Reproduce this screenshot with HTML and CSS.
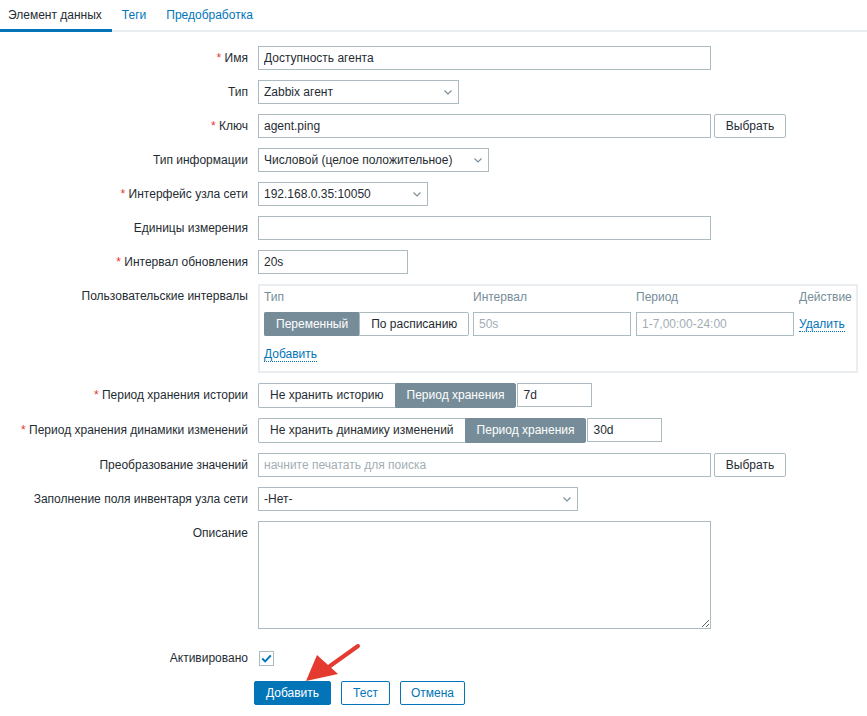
FILE: index.html
```html
<!DOCTYPE html>
<html lang="ru">
<head>
<meta charset="utf-8">
<title>Элемент данных</title>
<link rel="stylesheet" href="styles.css">
</head>
<body>
<nav class="tabs">
  <a class="tab active">Элемент данных</a>
  <a class="tab">Теги</a>
  <a class="tab">Предобработка</a>
</nav>

<form class="form">
  <div class="label"><span class="req">*</span> Имя</div>
  <div class="field"><input class="input w-453" value="Доступность агента"></div>

  <div class="label">Тип</div>
  <div class="field">
    <div class="select w-201"><span>Zabbix агент</span><svg class="chev" width="8" height="5" viewBox="0 0 8 5"><path d="M0.5 0.5L4 4L7.5 0.5"/></svg></div>
  </div>

  <div class="label"><span class="req">*</span> Ключ</div>
  <div class="field"><input class="input w-453" value="agent.ping"><button type="button" class="btn-alt">Выбрать</button></div>

  <div class="label">Тип информации</div>
  <div class="field">
    <div class="select w-231"><span>Числовой (целое положительное)</span><svg class="chev" width="8" height="5" viewBox="0 0 8 5"><path d="M0.5 0.5L4 4L7.5 0.5"/></svg></div>
  </div>

  <div class="label"><span class="req">*</span> Интерфейс узла сети</div>
  <div class="field">
    <div class="select w-170"><span>192.168.0.35:10050</span><svg class="chev" width="8" height="5" viewBox="0 0 8 5"><path d="M0.5 0.5L4 4L7.5 0.5"/></svg></div>
  </div>

  <div class="label">Единицы измерения</div>
  <div class="field"><input class="input w-453" value=""></div>

  <div class="label"><span class="req">*</span> Интервал обновления</div>
  <div class="field"><input class="input w-150" value="20s"></div>

  <div class="label">Пользовательские интервалы</div>
  <div class="field">
    <div class="intervals">
      <div class="int-grid">
        <div class="th">Тип</div>
        <div class="th">Интервал</div>
        <div class="th">Период</div>
        <div class="th">Действие</div>

        <div class="seg">
          <span class="seg-item on">Переменный</span><span class="seg-item">По расписанию</span>
        </div>
        <input class="input" placeholder="50s">
        <input class="input" placeholder="1-7,00:00-24:00">
        <div class="td-link"><a class="link">Удалить</a></div>
      </div>
      <div class="add-row"><a class="link">Добавить</a></div>
    </div>
  </div>

  <div class="label"><span class="req">*</span> Период хранения истории</div>
  <div class="field seg-row">
    <div class="seg">
      <span class="seg-item">Не хранить историю</span><span class="seg-item on">Период хранения</span>
    </div>
    <input class="input w-75" value="7d">
  </div>

  <div class="label"><span class="req">*</span> Период хранения динамики изменений</div>
  <div class="field seg-row">
    <div class="seg">
      <span class="seg-item">Не хранить динамику изменений</span><span class="seg-item on">Период хранения</span>
    </div>
    <input class="input w-75" value="30d">
  </div>

  <div class="label">Преобразование значений</div>
  <div class="field"><input class="input w-453" placeholder="начните печатать для поиска"><button type="button" class="btn-alt">Выбрать</button></div>

  <div class="label">Заполнение поля инвентаря узла сети</div>
  <div class="field">
    <div class="select w-320"><span>-Нет-</span><svg class="chev" width="8" height="5" viewBox="0 0 8 5"><path d="M0.5 0.5L4 4L7.5 0.5"/></svg></div>
  </div>

  <div class="label">Описание</div>
  <div class="field"><textarea class="textarea"></textarea></div>

  <div class="label row-check">Активировано</div>
  <div class="field row-check">
    <span class="checkbox"><svg width="11" height="9" viewBox="0 0 11 9"><path d="M1.2 4.6L4.2 7.4L9.8 1.4"/></svg></span>
  </div>

  <div class="field actions">
    <button type="button" class="btn-main">Добавить</button>
    <button type="button" class="btn-sec">Тест</button>
    <button type="button" class="btn-sec">Отмена</button>
  </div>
</form>

<svg class="pointer" width="70" height="50" viewBox="0 0 70 50">
  <path class="shaft" d="M63 4L35 24"/>
  <path class="head" d="M11 39L22 13L43 32Z"/>
</svg>
</body>
</html>
```

FILE: styles.css
```css
* { box-sizing: border-box; }

html, body {
  margin: 0;
  background: #fff;
}

body {
  position: relative;
  font-family: "Liberation Sans", Arial, sans-serif;
  font-size: 12px;
  color: #1f2c33;
}

/* tab strip */
.tabs {
  display: flex;
  border-bottom: 2px solid #ebeef0;
  height: 32px;
}

.tab {
  display: block;
  padding: 8px 10px 0;
  line-height: 14px;
  height: 32px;
  border-bottom: 3px solid transparent;
  color: #0275b8;
  cursor: pointer;
}

.tab:first-child { padding-left: 8px; padding-right: 10px; }

.tab.active {
  color: #1f2c33;
  border-bottom-color: #0275b8;
}

/* form grid */
.form {
  display: grid;
  grid-template-columns: 248px 1fr;
  column-gap: 10px;
  row-gap: 10px;
  margin-top: 14px;
}

.label {
  text-align: right;
  line-height: 24px;
  white-space: nowrap;
}

.req { color: #e33734; }

.field {
  display: flex;
  align-items: flex-start;
  min-height: 24px;
}

.input {
  height: 24px;
  border: 1px solid #acbbc0;
  background: #fff;
  padding: 0 5px;
  font: inherit;
  color: #1f2c33;
  outline: none;
  margin: 0;
}

.input::placeholder { color: #a3aeb4; }

.w-453 { width: 453px; }
.w-320 { width: 320px; }
.w-231 { width: 231px; }
.w-201 { width: 201px; }
.w-170 { width: 170px; }
.w-150 { width: 150px; }
.w-75 { width: 75px; }

.select {
  display: flex;
  align-items: center;
  justify-content: space-between;
  height: 24px;
  border: 1px solid #acbbc0;
  padding: 0 6px 0 5px;
  background: #fff;
}

.chev path {
  fill: none;
  stroke: #768d99;
  stroke-width: 1.1;
}

.btn-alt {
  height: 24px;
  width: 72px;
  margin-left: 3px;
  border: 1px solid #acbbc0;
  border-radius: 2px;
  background: #fff;
  font: inherit;
  color: #1f2c33;
  padding: 0;
}

/* segmented switch */
.seg {
  display: flex;
  height: 25px;
}

.seg-item {
  display: block;
  line-height: 23px;
  padding: 0 11px;
  border: 1px solid #acbbc0;
  background: #fff;
  white-space: nowrap;
}

.seg-item:first-child { border-radius: 2px 0 0 2px; border-right: 0; }
.seg-item:last-child { border-radius: 0 2px 2px 0; }

.seg-item.on {
  background: #768d99;
  border-color: #768d99;
  color: #fff;
}

.seg-row .input { height: 24px; margin-left: 1px; }

/* custom intervals block */
.intervals {
  width: 600px;
  height: 89px;
  border: 2px solid #ebeef0;
  padding: 3px 4px 0;
}

.int-grid {
  display: grid;
  grid-template-columns: 204px 158px 158px auto;
  column-gap: 5px;
  row-gap: 7px;
}

.th {
  color: #768d99;
  line-height: 16px;
}

.int-grid .seg { height: 24px; }
.int-grid .seg-item { line-height: 22px; }
.int-grid .input { width: 100%; }

.td-link { line-height: 24px; }

.add-row {
  margin-top: 10px;
  line-height: 16px;
}

.link {
  color: #0275b8;
  border-bottom: 1px dotted #0275b8;
  cursor: pointer;
}

.textarea {
  width: 453px;
  height: 108px;
  border: 1px solid #acbbc0;
  font: inherit;
  margin: 0;
  resize: vertical;
  display: block;
}

.row-check { margin-top: 7px; }

.field.row-check { align-items: center; height: 24px; }

.checkbox {
  display: flex;
  align-items: center;
  justify-content: center;
  width: 15px;
  height: 15px;
  margin-left: 1px;
  border: 1px solid #acbbc0;
  background: #fff;
}

.checkbox path {
  fill: none;
  stroke: #0275b8;
  stroke-width: 2;
}

/* footer buttons */
.actions {
  grid-column: 2;
  margin-left: -4px;
  margin-top: 1px;
  gap: 10px;
}

.btn-main, .btn-sec {
  height: 24px;
  border-radius: 2px;
  font: inherit;
  border: 1px solid #0275b8;
}

.btn-main {
  background: #0275b8;
  color: #fff;
  padding: 0 11px;
}

.btn-sec {
  background: #fff;
  color: #0275b8;
  padding: 0 11px;
}

.btn-sec:last-child { padding: 0 10px; }

/* red pointer arrow over the submit button */
.pointer {
  position: absolute;
  left: 295px;
  top: 642px;
}

.pointer .shaft {
  stroke: #e53a2f;
  stroke-width: 4;
  stroke-linecap: round;
  fill: none;
}

.pointer .head { fill: #e53a2f; }
```
